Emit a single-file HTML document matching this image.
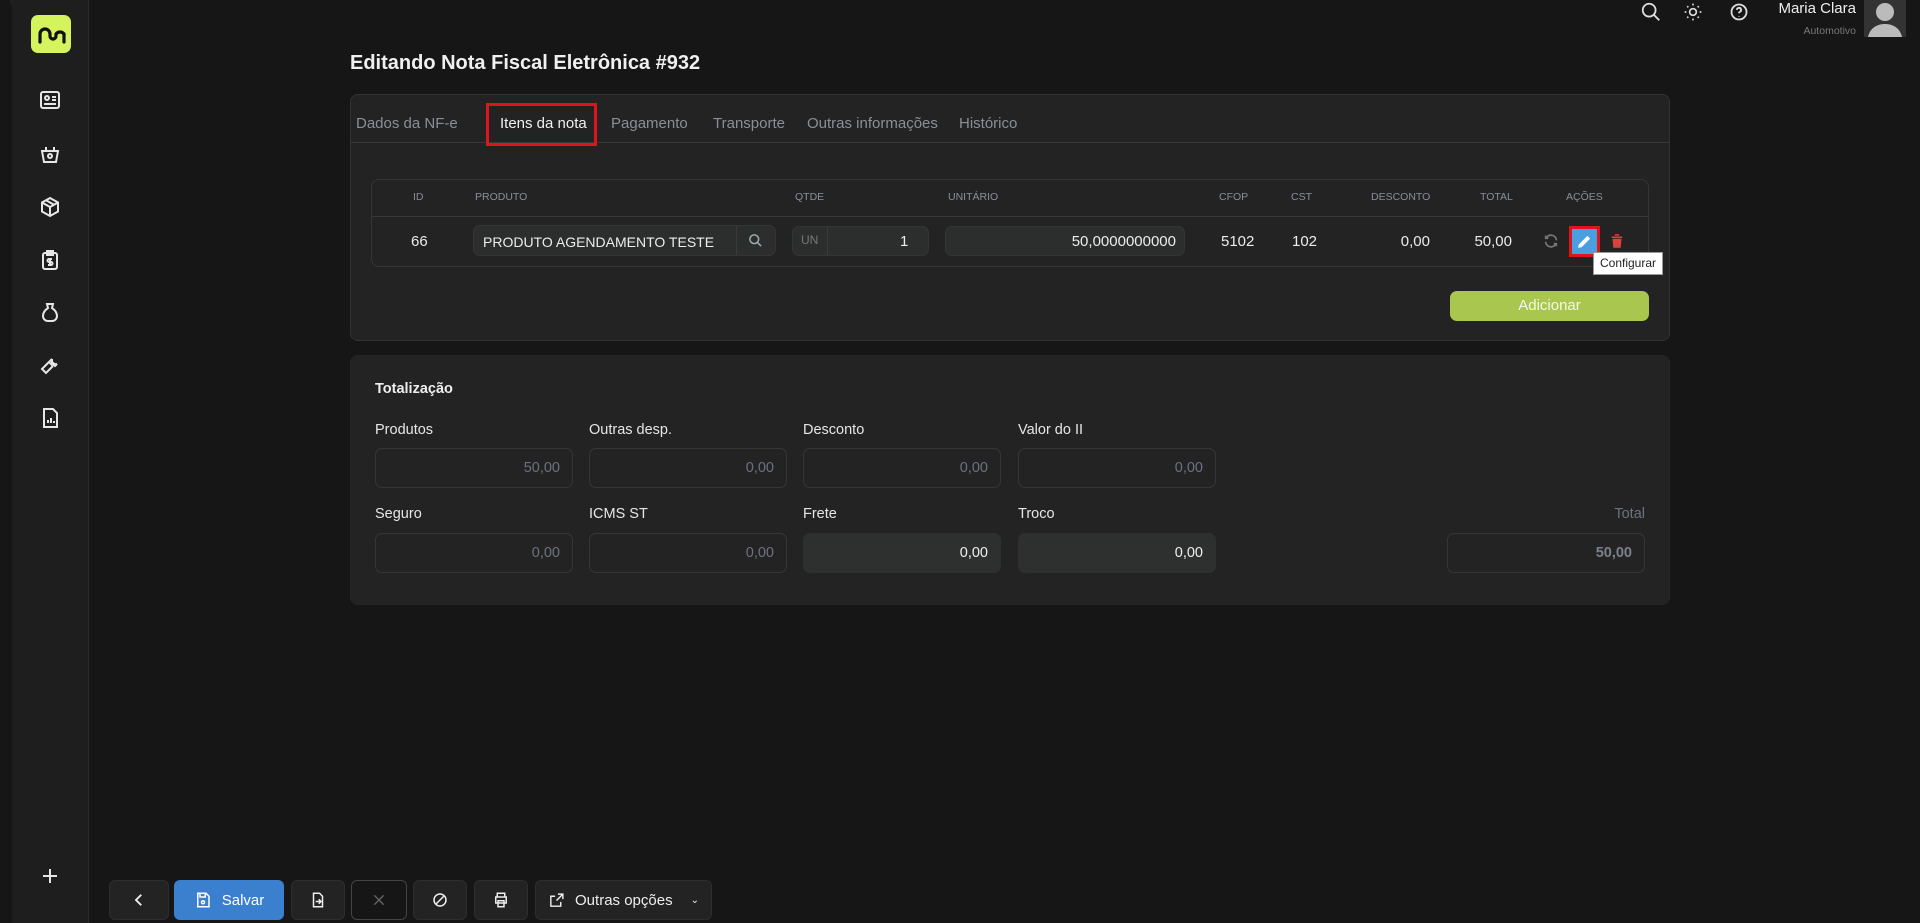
<!DOCTYPE html>
<html><head><meta charset="utf-8"><style>
*{box-sizing:border-box;margin:0;padding:0}
body{width:1920px;height:923px;background:#161616;font-family:"Liberation Sans",sans-serif;color:#e6e6e6;position:relative;overflow:hidden}
.abs{position:absolute}
.side{left:12px;top:0;width:77px;height:923px;background:#1e1e1e;border-right:1px solid #2a2a2a}
.logo{left:31px;top:15px;width:40px;height:38px;background:#d4f35d;border-radius:7px}
.ic{position:absolute;left:38px;width:24px;height:24px}
.card{background:#232323;border:1px solid #333;border-radius:8px}
.tab{position:absolute;top:115px;font-size:15px;color:#8a8f98}
.th{position:absolute;top:191px;font-size:10.5px;color:#8a8f98}
.inp{position:absolute;background:#2c2e2e;border:1px solid #353535;border-radius:7px}
.td{position:absolute;top:233px;font-size:15px;color:#ececec}
.lbl{position:absolute;font-size:14.5px;color:#e6e6e6}
.f{position:absolute;width:198px;height:40px;border:1px solid #363636;border-radius:7px;text-align:right;padding-right:12px;line-height:38px;font-size:14.5px;color:#6c7280}
.f.d{background:#2e302f;color:#f0f0f0;border-color:#2e302f}
.btn{position:absolute;top:880px;height:40px;background:#232323;border:1px solid #2e2e2e;border-radius:6px;display:flex;align-items:center;justify-content:center}
svg{display:block}
</style></head><body>
<div class="abs" style="left:10px;top:0;width:56px;height:6px;background:#232323;border-radius:0 0 6px 6px"></div>
<div class="abs side"></div>
<div class="abs logo"><svg width="40" height="38" viewBox="0 0 40 38"><path d="M9 27V19a5 5 0 0 1 10 0v2a3 3 0 0 0 6 0v-2a5 5 0 0 1 8 0" fill="none" stroke="#111" stroke-width="3.2" stroke-linecap="round"/><path d="M33 19v8" stroke="#111" stroke-width="3.2" stroke-linecap="round"/></svg></div>
<svg class="ic" style="top:88px" viewBox="0 0 24 24" fill="none" stroke="#e6e6e6" stroke-width="2"><rect x="3" y="4" width="18" height="16" rx="2"/><circle cx="9" cy="10" r="2"/><path d="M6 16h12M14 9h4M14 12h4"/></svg>
<svg class="ic" style="top:142px" viewBox="0 0 24 24" fill="none" stroke="#e6e6e6" stroke-width="2"><path d="M4 9h16l-2 11H6z"/><path d="M8 9V5M16 9V5"/><circle cx="12" cy="14" r="2"/></svg>
<svg class="ic" style="top:195px" viewBox="0 0 24 24" fill="none" stroke="#e6e6e6" stroke-width="2"><path d="M12 3l8 4.5v9L12 21l-8-4.5v-9z"/><path d="M12 12l8-4.5M12 12v9M12 12L4 7.5M8 5.3l8 4.5"/></svg>
<svg class="ic" style="top:248px" viewBox="0 0 24 24" fill="none" stroke="#e6e6e6" stroke-width="2"><rect x="5" y="5" width="14" height="16" rx="2"/><path d="M9 3h6v4H9zM14 11h-3a1.5 1.5 0 0 0 0 3h2a1.5 1.5 0 0 1 0 3h-3M12 10v8"/></svg>
<svg class="ic" style="top:300px" viewBox="0 0 24 24" fill="none" stroke="#e6e6e6" stroke-width="2"><path d="M9 4h6l-1 4c3 2 5 5 5 8a5 5 0 0 1-5 5h-4a5 5 0 0 1-5-5c0-3 2-6 5-8z"/></svg>
<svg class="ic" style="top:353px" viewBox="0 0 24 24" fill="none" stroke="#e6e6e6" stroke-width="2"><path d="M14 6a4 4 0 0 0 5 5l-2 2-3-3zM14 6l-3 3 4 4M11 9l-7 7 4 4 7-7"/></svg>
<svg class="ic" style="top:406px" viewBox="0 0 24 24" fill="none" stroke="#e6e6e6" stroke-width="2"><path d="M6 3h9l4 4v14H6z"/><path d="M10 17v-3M13 17v-5M16 17v-2"/></svg>
<svg class="ic" style="top:864px" viewBox="0 0 24 24" fill="none" stroke="#e6e6e6" stroke-width="2"><path d="M12 5v14M5 12h14"/></svg>

<svg class="abs" style="left:1640px;top:1px" width="22" height="22" viewBox="0 0 24 24" fill="none" stroke="#ddd" stroke-width="2"><circle cx="10" cy="10" r="7"/><path d="M15 15l6 6"/></svg>
<svg class="abs" style="left:1683px;top:2px" width="20" height="20" viewBox="0 0 24 24" fill="none" stroke="#ddd" stroke-width="2"><circle cx="12" cy="12" r="4"/><path d="M12 2v2M12 20v2M2 12h2M20 12h2M5 5l1.4 1.4M17.6 17.6L19 19M5 19l1.4-1.4M17.6 6.4L19 5" stroke-dasharray="2 2"/></svg>
<svg class="abs" style="left:1729px;top:2px" width="20" height="20" viewBox="0 0 24 24" fill="none" stroke="#ddd" stroke-width="2.2"><circle cx="12" cy="12" r="9"/><path d="M9.5 9.5a2.5 2.5 0 1 1 3.5 2.3c-.7.4-1 .9-1 1.7M12 17v.5"/></svg>
<div class="abs" style="right:64px;top:0;font-size:15px;color:#eee">Maria Clara</div>
<div class="abs" style="right:64px;top:25px;font-size:10.5px;color:#777">Automotivo</div>
<div class="abs" style="left:1864px;top:0;width:42px;height:37px;background:#333;overflow:hidden"><svg width="42" height="37" viewBox="0 0 42 37"><circle cx="21" cy="12" r="9" fill="#bbb"/><path d="M4 37c2-9 9-13 17-13s15 4 17 13z" fill="#bbb"/></svg></div>

<div class="abs" style="left:350px;top:52px;font-size:20px;font-weight:bold;color:#f0f0f0">Editando Nota Fiscal Eletrônica #932</div>

<div class="abs card" style="left:350px;top:94px;width:1320px;height:247px"></div>
<div class="abs" style="left:351px;top:142px;width:1318px;height:1px;background:#383838"></div>
<div class="tab" style="left:356px">Dados da NF-e</div>
<div class="tab" style="left:500px;color:#f0f0f0">Itens da nota</div>
<div class="abs" style="left:486px;top:103px;width:111px;height:43px;border:3px solid #e0141c"></div>
<div class="tab" style="left:611px">Pagamento</div>
<div class="tab" style="left:713px">Transporte</div>
<div class="tab" style="left:807px">Outras informações</div>
<div class="tab" style="left:959px">Histórico</div>

<div class="abs" style="left:371px;top:179px;width:1278px;height:88px;border:1px solid #353535;border-radius:8px;background:#232323"></div>
<div class="abs" style="left:372px;top:216px;width:1276px;height:1px;background:#383838"></div>
<div class="th" style="left:413px">ID</div><div class="th" style="left:475px">PRODUTO</div><div class="th" style="left:795px">QTDE</div><div class="th" style="left:948px">UNITÁRIO</div><div class="th" style="left:1219px">CFOP</div><div class="th" style="left:1291px">CST</div><div class="th" style="left:1371px">DESCONTO</div><div class="th" style="left:1480px">TOTAL</div><div class="th" style="left:1566px">AÇÕES</div>
<div class="td" style="left:411px">66</div>
<div class="inp" style="left:473px;top:225px;width:303px;height:31px"></div>
<div class="abs" style="left:736px;top:226px;width:1px;height:29px;background:#3a3a3a"></div>
<div class="td" style="left:483px;font-size:14px;top:234px">PRODUTO AGENDAMENTO TESTE</div>
<svg class="abs" style="left:748px;top:233px" width="15" height="15" viewBox="0 0 24 24" fill="none" stroke="#9aa" stroke-width="2.5"><circle cx="10" cy="10" r="7"/><path d="M15 15l6 6"/></svg>
<div class="inp" style="left:792px;top:226px;width:137px;height:30px"></div>
<div class="abs" style="left:827px;top:227px;width:1px;height:28px;background:#3a3a3a"></div>
<div class="abs" style="left:801px;top:233px;font-size:12px;color:#777">UN</div>
<div class="td" style="left:900px">1</div>
<div class="inp" style="left:945px;top:226px;width:240px;height:30px"></div>
<div class="td" style="right:744px">50,0000000000</div>
<div class="td" style="left:1221px">5102</div>
<div class="td" style="left:1292px">102</div>
<div class="td" style="right:490px">0,00</div>
<div class="td" style="right:408px">50,00</div>
<svg class="abs" style="left:1543px;top:233px" width="16" height="16" viewBox="0 0 24 24" fill="none" stroke="#777" stroke-width="2.5"><path d="M20 11a8 8 0 0 0-14-5l-2 2M4 4v4h4M4 13a8 8 0 0 0 14 5l2-2M20 20v-4h-4"/></svg>
<div class="abs" style="left:1569px;top:226px;width:31px;height:31px;border:3px solid #e0141c;background:#4a9fe0"></div>
<svg class="abs" style="left:1576px;top:233px" width="17" height="17" viewBox="0 0 24 24" fill="#fff"><path d="M3 21l1-5L16 4l4 4L8 20z"/></svg>
<svg class="abs" style="left:1608px;top:232px" width="18" height="18" viewBox="0 0 24 24" fill="#d9423e"><path d="M5 6h14v2H5zM9 3h6v2H9zM6 9h12l-1 12H7z"/></svg>
<div class="abs" style="left:1593px;top:252px;width:70px;height:23px;background:#fff;border:1px solid #999;color:#222;font-size:12px;line-height:21px;text-align:center">Configurar</div>
<div class="abs" style="left:1450px;top:291px;width:199px;height:30px;background:#a9c74f;border-radius:7px;color:#f4f8e8;font-size:15px;text-align:center;line-height:30px">Adicionar</div>

<div class="abs card" style="left:350px;top:355px;width:1320px;height:250px;border-color:#262626"></div>
<div class="abs" style="left:375px;top:381px;font-size:14.5px;font-weight:bold;color:#eee">Totalização</div>
<div class="lbl" style="left:375px;top:422px">Produtos</div><div class="lbl" style="left:589px;top:422px">Outras desp.</div><div class="lbl" style="left:803px;top:422px">Desconto</div><div class="lbl" style="left:1018px;top:422px">Valor do II</div>
<div class="f" style="left:375px;top:448px">50,00</div><div class="f" style="left:589px;top:448px">0,00</div><div class="f" style="left:803px;top:448px">0,00</div><div class="f" style="left:1018px;top:448px">0,00</div>
<div class="lbl" style="left:375px;top:506px">Seguro</div><div class="lbl" style="left:589px;top:506px">ICMS ST</div><div class="lbl" style="left:803px;top:506px">Frete</div><div class="lbl" style="left:1018px;top:506px">Troco</div>
<div class="lbl" style="right:275px;top:506px;color:#6c7280">Total</div>
<div class="f" style="left:375px;top:533px">0,00</div><div class="f" style="left:589px;top:533px">0,00</div><div class="f d" style="left:803px;top:533px">0,00</div><div class="f d" style="left:1018px;top:533px">0,00</div>
<div class="f" style="left:1447px;top:533px;font-weight:bold;color:#7a808c">50,00</div>

<div class="btn" style="left:109px;width:60px"><svg width="18" height="18" viewBox="0 0 24 24" fill="none" stroke="#eee" stroke-width="2.5"><path d="M15 5l-7 7 7 7"/></svg></div>
<div class="btn" style="left:174px;width:110px;background:#3b7fcf;border-color:#3b7fcf;color:#fff;font-size:15px;gap:10px"><svg width="18" height="18" viewBox="0 0 24 24" fill="none" stroke="#fff" stroke-width="2"><path d="M5 3h11l4 4v14H5z"/><path d="M8 3v5h7V3"/><circle cx="12" cy="15" r="2"/></svg>Salvar</div>
<div class="btn" style="left:291px;width:54px"><svg width="18" height="18" viewBox="0 0 24 24" fill="none" stroke="#eee" stroke-width="2"><path d="M6 3h8l4 4v14H6z"/><path d="M9 14h6M13 11l3 3-3 3"/></svg></div>
<div class="btn" style="left:351px;width:56px;background:#161616;border-color:#444"><svg width="16" height="16" viewBox="0 0 24 24" fill="none" stroke="#666" stroke-width="2"><path d="M5 5l14 14M19 5L5 19"/></svg></div>
<div class="btn" style="left:413px;width:54px"><svg width="18" height="18" viewBox="0 0 24 24" fill="none" stroke="#eee" stroke-width="2"><circle cx="12" cy="12" r="8"/><path d="M7 17L17 7"/></svg></div>
<div class="btn" style="left:474px;width:54px"><svg width="18" height="18" viewBox="0 0 24 24" fill="none" stroke="#eee" stroke-width="2"><path d="M7 8V3h10v5M5 8h14v8H5zM8 13h8v8H8z"/></svg></div>
<div class="btn" style="left:535px;width:177px;color:#eee;font-size:15px;gap:10px"><svg width="17" height="17" viewBox="0 0 24 24" fill="none" stroke="#eee" stroke-width="2"><path d="M14 3h7v7M21 3l-9 9M18 14v6H4V6h6"/></svg>Outras opções <span style="font-size:10px;margin-left:8px">⌄</span></div>
</body></html>
